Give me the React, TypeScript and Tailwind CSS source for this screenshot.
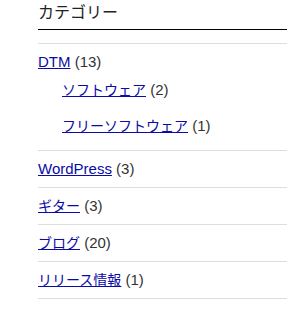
const ITEMS = [
  {
    name: "DTM",
    count: 13,
    children: [
      { name: "ソフトウェア", count: 2 },
      { name: "フリーソフトウェア", count: 1 },
    ],
  },
  { name: "WordPress", count: 3 },
  { name: "ギター", count: 3 },
  { name: "ブログ", count: 20 },
  { name: "リリース情報", count: 1 },
];

// latin text renders a touch larger than the kana next to it
const isLatin = (s: string) => /^[\x00-\x7f]+$/.test(s);

function Entry({ name, count }: { name: string; count: number }) {
  return (
    <>
      <a
        href="#"
        className={`text-[#0a0aa6] underline ${isLatin(name) ? "text-[15px]" : "text-[14px]"}`}
      >
        {name}
      </a>
      <span className="text-[15px]"> ({count})</span>
    </>
  );
}

export default function App() {
  return (
    <div
      className="min-h-screen bg-white pl-[38px] text-[#333]"
      style={{ fontFamily: '"Liberation Sans", "Noto Sans CJK JP", sans-serif' }}
    >
      <h2 className="border-b border-black pt-[2px] pb-[5px] text-[16px] leading-[22px] font-normal text-[#222]">
        カテゴリー
      </h2>
      <ul className="mt-[13px] border-b border-[#ddd] leading-[16px]">
        {ITEMS.map((item) => (
          <li
            key={item.name}
            className={`border-t border-[#ddd] pt-[10px] ${item.children ? "pb-[6px]" : "pb-[10px]"}`}
          >
            <Entry name={item.name} count={item.count} />
            {item.children && (
              <ul className="mt-[2px] pl-[24px]">
                {item.children.map((c) => (
                  <li key={c.name} className="py-[10px]">
                    <Entry name={c.name} count={c.count} />
                  </li>
                ))}
              </ul>
            )}
          </li>
        ))}
      </ul>
    </div>
  );
}
